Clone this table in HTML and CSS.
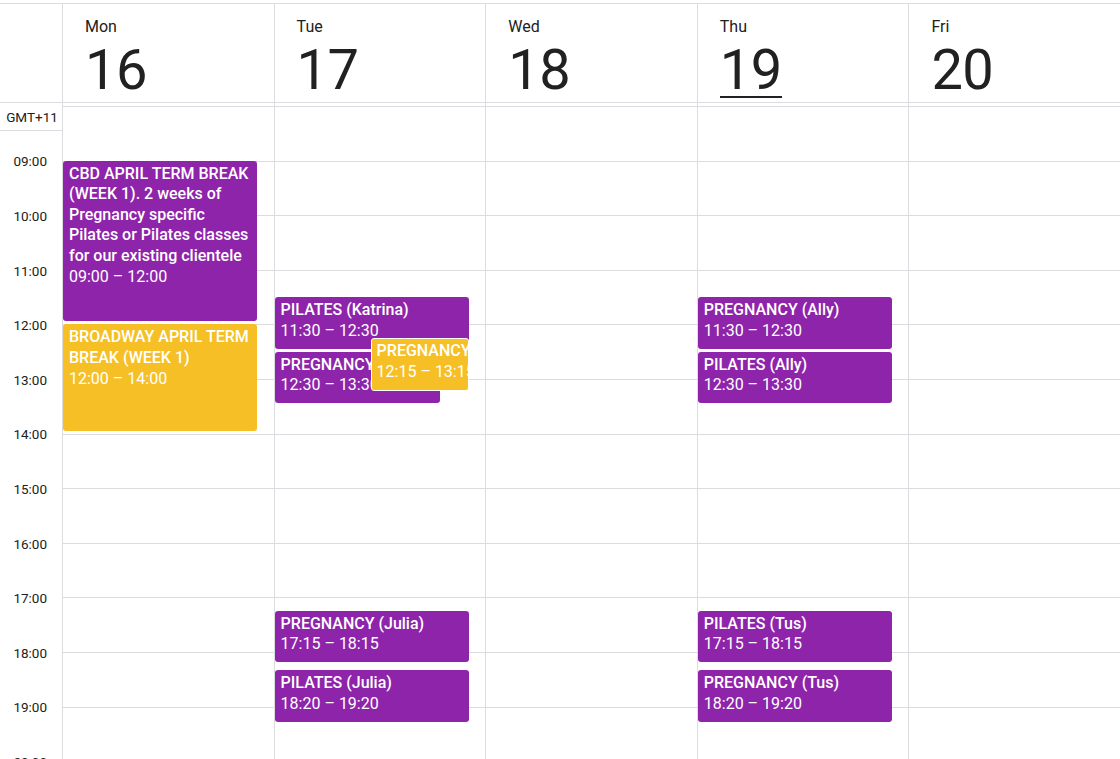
FILE: index.html
```html
<!DOCTYPE html>
<html>
<head>
<meta charset="utf-8">
<link rel="stylesheet" href="styles.css">
</head>
<body>
<div class="cal">
  <div class="head">
    <div class="head-gutter"></div>
    <div class="head-day"><div class="dname">Mon</div><div class="dnum">16</div></div>
    <div class="head-day"><div class="dname">Tue</div><div class="dnum">17</div></div>
    <div class="head-day"><div class="dname">Wed</div><div class="dnum">18</div></div>
    <div class="head-day"><div class="dname">Thu</div><div class="dnum"><span class="today">19</span></div></div>
    <div class="head-day"><div class="dname">Fri</div><div class="dnum">20</div></div>
  </div>
  <div class="body">
    <div class="gutter">
      <div class="tz">GMT+11</div>
      <div class="labels">
        <div class="lbl">09:00</div>
        <div class="lbl">10:00</div>
        <div class="lbl">11:00</div>
        <div class="lbl">12:00</div>
        <div class="lbl">13:00</div>
        <div class="lbl">14:00</div>
        <div class="lbl">15:00</div>
        <div class="lbl">16:00</div>
        <div class="lbl">17:00</div>
        <div class="lbl">18:00</div>
        <div class="lbl">19:00</div>
        <div class="lbl">20:00</div>
      </div>
    </div>

    <div class="day">
      <div class="slots">
        <div class="slot"></div><div class="slot"></div><div class="slot"></div><div class="slot"></div>
        <div class="slot"></div><div class="slot"></div><div class="slot"></div><div class="slot"></div>
        <div class="slot"></div><div class="slot"></div><div class="slot"></div><div class="slot"></div>
        <div class="slot"></div>
        <div class="ev purple" style="top:54.6px;height:160.8px">
          <div class="t">CBD APRIL TERM BREAK (WEEK 1). 2 weeks of Pregnancy specific Pilates or Pilates classes for our existing clientele</div>
          <div class="tm">09:00 – 12:00</div>
        </div>
        <div class="ev yellow" style="top:218.4px;height:106.2px">
          <div class="t">BROADWAY APRIL TERM BREAK (WEEK 1)</div>
          <div class="tm">12:00 – 14:00</div>
        </div>
      </div>
    </div>

    <div class="day">
      <div class="slots">
        <div class="slot"></div><div class="slot"></div><div class="slot"></div><div class="slot"></div>
        <div class="slot"></div><div class="slot"></div><div class="slot"></div><div class="slot"></div>
        <div class="slot"></div><div class="slot"></div><div class="slot"></div><div class="slot"></div>
        <div class="slot"></div>
        <div class="ev purple" style="top:191.1px;height:51.6px">
          <div class="t nw">PILATES (Katrina)</div>
          <div class="tm nw">11:30 – 12:30</div>
        </div>
        <div class="ev purple narrow" style="top:245.7px;height:51.6px">
          <div class="t nw">PREGNANCY (Katrina)</div>
          <div class="tm nw">12:30 – 13:30</div>
        </div>
        <div class="ev yellow overlap" style="top:232px;height:52.6px">
          <div class="t nw">PREGNANCY (Katrina)</div>
          <div class="tm nw">12:15 – 13:15</div>
        </div>
        <div class="ev purple" style="top:504.9px;height:51.6px">
          <div class="t nw">PREGNANCY (Julia)</div>
          <div class="tm nw">17:15 – 18:15</div>
        </div>
        <div class="ev purple" style="top:564.1px;height:51.6px">
          <div class="t nw">PILATES (Julia)</div>
          <div class="tm nw">18:20 – 19:20</div>
        </div>
      </div>
    </div>

    <div class="day">
      <div class="slots">
        <div class="slot"></div><div class="slot"></div><div class="slot"></div><div class="slot"></div>
        <div class="slot"></div><div class="slot"></div><div class="slot"></div><div class="slot"></div>
        <div class="slot"></div><div class="slot"></div><div class="slot"></div><div class="slot"></div>
        <div class="slot"></div>
      </div>
    </div>

    <div class="day">
      <div class="slots">
        <div class="slot"></div><div class="slot"></div><div class="slot"></div><div class="slot"></div>
        <div class="slot"></div><div class="slot"></div><div class="slot"></div><div class="slot"></div>
        <div class="slot"></div><div class="slot"></div><div class="slot"></div><div class="slot"></div>
        <div class="slot"></div>
        <div class="ev purple" style="top:191.1px;height:51.6px">
          <div class="t nw">PREGNANCY (Ally)</div>
          <div class="tm nw">11:30 – 12:30</div>
        </div>
        <div class="ev purple" style="top:245.7px;height:51.6px">
          <div class="t nw">PILATES (Ally)</div>
          <div class="tm nw">12:30 – 13:30</div>
        </div>
        <div class="ev purple" style="top:504.9px;height:51.6px">
          <div class="t nw">PILATES (Tus)</div>
          <div class="tm nw">17:15 – 18:15</div>
        </div>
        <div class="ev purple" style="top:564.1px;height:51.6px">
          <div class="t nw">PREGNANCY (Tus)</div>
          <div class="tm nw">18:20 – 19:20</div>
        </div>
      </div>
    </div>

    <div class="day">
      <div class="slots">
        <div class="slot"></div><div class="slot"></div><div class="slot"></div><div class="slot"></div>
        <div class="slot"></div><div class="slot"></div><div class="slot"></div><div class="slot"></div>
        <div class="slot"></div><div class="slot"></div><div class="slot"></div><div class="slot"></div>
        <div class="slot"></div>
      </div>
    </div>
  </div>
</div>
</body>
</html>
```

FILE: styles.css
```css
* { box-sizing: border-box; }
html, body { margin: 0; padding: 0; background: #fff; }
body {
  font-family: Roboto, "Liberation Sans", sans-serif;
  color: #202124;
  height: 759px;
  overflow: hidden;
}
.cal { padding-top: 3px; }

.head {
  display: grid;
  grid-template-columns: 62px repeat(5, 1fr);
  border-top: 1px solid #dadce0;
  border-bottom: 1px solid #dadce0;
  height: 100px;
}
.head-day {
  border-left: 1px solid #dadce0;
  padding-left: 22px;
  padding-top: 13px;
}
.dname {
  font-size: 16px;
  line-height: 20px;
  color: #212121;
}
.dnum {
  font-size: 56px;
  line-height: 56px;
  font-weight: 400;
  color: #212121;
  margin-top: 5px;
  letter-spacing: -0.5px;
}
.today {
  display: inline-block;
  border-bottom: 2px solid #212121;
  line-height: 51px;
}

.body {
  display: grid;
  grid-template-columns: 62px repeat(5, 1fr);
}
.gutter { position: relative; }
.tz {
  height: 28px;
  border-bottom: 1px solid #dadce0;
  font-size: 13.5px;
  color: #212121;
  display: flex;
  align-items: center;
  justify-content: center;
  padding-left: 2px;
  padding-top: 1px;
}
.labels { margin-top: 3.2px; }
.lbl {
  height: 54.6px;
  display: flex;
  align-items: center;
  justify-content: flex-end;
  padding-right: 15px;
  font-size: 13.5px;
  color: #212121;
}

.day {
  border-left: 1px solid #dadce0;
  padding-top: 3px;
}
.slots { position: relative; }
.slot {
  height: 54.6px;
  border-top: 1px solid #dadce0;
}

.ev {
  position: absolute;
  left: 0;
  width: calc(100% - 16.5px);
  border-radius: 3px;
  color: #fff;
  padding: 3px 5px 0 6px;
  overflow: hidden;
  font-size: 16px;
  line-height: 20.6px;
}
.purple { background: #8e24aa; }
.yellow { background: #f6bf26; }
.narrow { width: 165px; }
.overlap {
  left: 96px;
  width: 98px;
  border: 1px solid #fff;
  padding: 2px 0 0 5px;
  z-index: 2;
}
.t { font-weight: 500; }
.tm { font-weight: 400; }
.nw { white-space: nowrap; overflow: hidden; }
```
